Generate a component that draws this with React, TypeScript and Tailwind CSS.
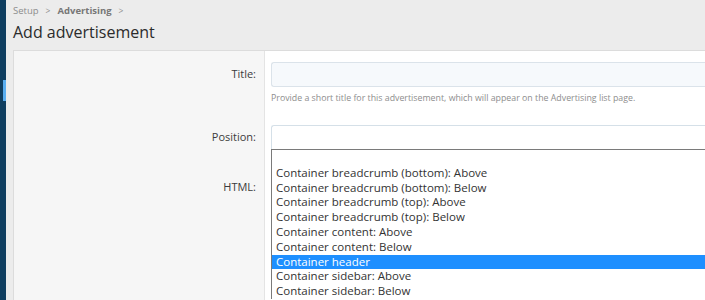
import React from 'react';

const OPTIONS = [
  '',
  'Container breadcrumb (bottom): Above',
  'Container breadcrumb (bottom): Below',
  'Container breadcrumb (top): Above',
  'Container breadcrumb (top): Below',
  'Container content: Above',
  'Container content: Below',
  'Container header',
  'Container sidebar: Above',
  'Container sidebar: Below',
];

const App: React.FC = () => {
  return (
    <div className="flex h-[300px] w-[705px] overflow-hidden bg-[#ececec] font-['Open_Sans',sans-serif]">
      {/* side nav strip */}
      <div className="flex w-[6px] shrink-0 flex-col bg-[#0f3e60] pt-[80px]">
        <div className="ml-[3px] h-[21px] w-[3px] bg-[#5aaef0]" />
      </div>

      <div className="flex min-w-0 flex-1 flex-col pl-[7px]">
        <div className="flex items-center gap-[7px] pt-[4px] text-[9.5px] leading-[14px] text-[#8c8c8c]">
          <span>Setup</span>
          <span className="text-[8.5px]">&gt;</span>
          <span className="font-bold text-[#777]">Advertising</span>
          <span className="text-[8.5px]">&gt;</span>
        </div>
        <h1 className="mt-[2px] text-[16px] leading-[24px] text-[#2b2b2b]">Add advertisement</h1>

        <div className="mt-[6px] flex flex-1 border-l border-t border-[#dcdcdc] bg-[#f6f6f6]">
          <div className="flex w-[250px] shrink-0 flex-col items-end pr-[8px] text-[11px] text-[#3c3c3c]">
            <div className="mt-[15px] leading-[16px]">Title:</div>
            <div className="mt-[47px] leading-[16px]">Position:</div>
            <div className="mt-[34px] leading-[16px]">HTML:</div>
          </div>

          <div className="flex min-w-0 flex-1 flex-col border-l border-[#e4e4e4] bg-white pl-[6px]">
            <div className="mt-[11px] h-[25px] rounded-l-[3px] border border-r-0 border-[#dbe3ea] bg-[#f6f9fc]" />
            <p className="mt-[4px] whitespace-nowrap text-[8.8px] leading-[14px] text-[#8e8e8e]">
              Provide a short title for this advertisement, which will appear on the Advertising list page.
            </p>
            <div className="relative mt-[20px]">
              <div className="h-[25px] rounded-tl-[3px] border border-r-0 border-b-0 border-[#d5e0e8] bg-white" />
              <div className="absolute left-0 top-[24px] w-[460px] border-l border-t border-[#7a7a7a] bg-white pt-[1px] text-[11.5px] leading-[14.8px] text-[#333]">
                {OPTIONS.map((opt, i) => (
                  <div
                    key={i}
                    className={
                      'h-[14.8px] whitespace-nowrap pl-[4px] ' +
                      (opt === 'Container header' ? 'bg-[#1e8fff] text-white' : '')
                    }
                  >
                    {opt}
                  </div>
                ))}
              </div>
            </div>
          </div>
        </div>
      </div>
    </div>
  );
};

export default App;
